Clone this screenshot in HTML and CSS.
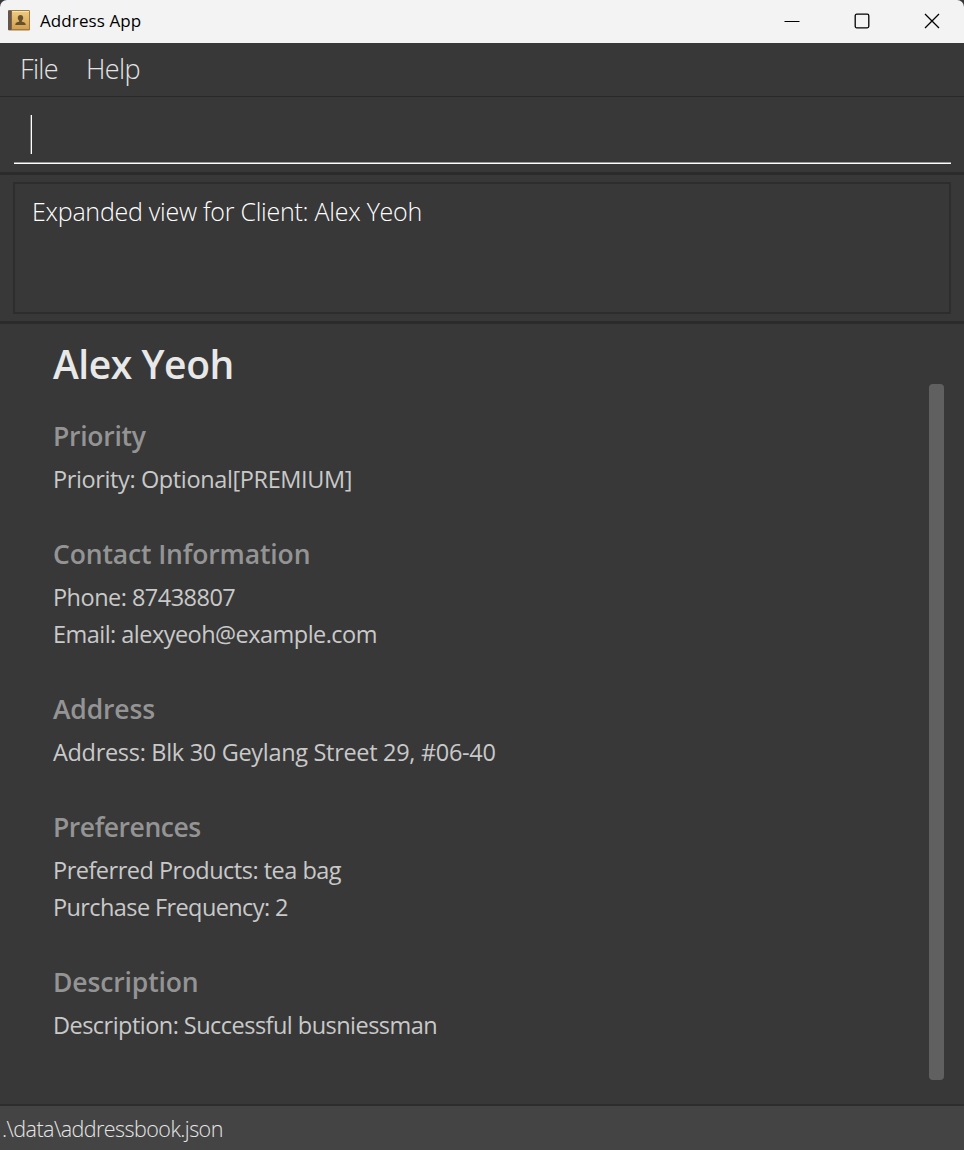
FILE: index.html
```html
<!DOCTYPE html>
<html lang="en">
<head>
<meta charset="utf-8">
<title>Address App</title>
<link rel="stylesheet" href="styles.css">
</head>
<body>
<div class="window">
  <header class="titlebar">
    <svg class="app-icon" width="22" height="21" viewBox="0 0 22 21">
      <defs><linearGradient id="cover" x1="0" y1="0" x2="0" y2="1"><stop offset="0" stop-color="#eccb83"/><stop offset="1" stop-color="#d3a050"/></linearGradient></defs>
      <rect x="0" y="0" width="22" height="20.5" rx="1.2" fill="#a47a3c"/>
      <rect x="4" y="1" width="17" height="18" fill="url(#cover)"/>
      <rect x="0" y="0.5" width="3.6" height="19.5" rx="1" fill="#65544c"/>
      <rect x="4" y="1" width="17" height="1" fill="#f7e2ad"/>
      <path d="M12.500 5c1.800 0 2.700 1.100 2.700 2.800 0 1.200-.5 2.300-1.300 2.900v1c1.600.3 3.900.9 3.900 3.300H7.200c0-2.400 2.300-3 3.900-3.300v-1c-.8-.6-1.300-1.700-1.300-2.900C9.800 6.100 10.700 5 12.500 5z" fill="#66502c"/>
    </svg>
    <span class="app-title">Address App</span>
    <div class="controls">
      <svg width="16" height="16" viewBox="0 0 16 16"><path d="M0.500 8.500h15" stroke="#000"/></svg>
      <svg width="16" height="16" viewBox="0 0 16 16"><rect x="1.200" y="1.200" width="13.600" height="13.600" rx="1.500" fill="none" stroke="#000" stroke-width="1.300"/></svg>
      <svg width="16" height="16" viewBox="0 0 16 16"><path d="M1 1l14 14M15 1L1 15" stroke="#000" stroke-width="1.300"/></svg>
    </div>
  </header>
  <nav class="menubar"><span>File</span><span>Help</span></nav>
  <section class="command"><div class="field"><span class="caret"></span></div></section>
  <section class="result"><div class="result-box">Expanded view for Client: Alex Yeoh</div></section>
  <main class="details">
    <div class="person">
      <h1>Alex Yeoh</h1>
      <section class="group">
        <h2 class="priority-title">Priority</h2>
        <p class="priority">Priority: Optional[PREMIUM]</p>
      </section>
      <section class="group">
        <h2 class="contact-title">Contact Information</h2>
        <p class="phone">Phone: 87438807</p>
        <p class="email">Email: alexyeoh@example.com</p>
      </section>
      <section class="group">
        <h2 class="address-title">Address</h2>
        <p class="address">Address: Blk 30 Geylang Street 29, #06-40</p>
      </section>
      <section class="group">
        <h2 class="preferences-title">Preferences</h2>
        <p class="products">Preferred Products: tea bag</p>
        <p class="frequency">Purchase Frequency: 2</p>
      </section>
      <section class="group">
        <h2 class="description-title">Description</h2>
        <p class="description">Description: Successful busniessman</p>
      </section>
    </div>
    <div class="scroll-thumb"></div>
  </main>
  <footer class="statusbar">.\data\addressbook.json</footer>
</div>
</body>
</html>
```
FILE: styles.css
```css
* { box-sizing: border-box; }
body { margin: 0; background: #383838; font-family: "Open Sans", "Noto Sans", sans-serif; }
h1, h2, p { margin: 0; white-space: nowrap; }
.window { width: 964px; height: 1150px; display: flex; flex-direction: column; background: #383838; overflow: hidden; }
.window > * { flex-shrink: 0; }

.titlebar { height: 43px; display: flex; align-items: center; background: #f3f3f3; color: #000; padding: 0 24px 2px 8px; border-radius: 7px 7px 0 0; }
.app-title { font-size: 17px; letter-spacing: 0.100px; margin-left: 10px; }
.controls { display: flex; gap: 54px; margin-left: auto; }
.controls svg { display: block; }

.menubar { height: 54px; display: flex; gap: 28px; padding-left: 20px; border-bottom: 1px solid #282828; font-size: 27px; font-weight: 300; letter-spacing: -0.650px; line-height: 52px; color: #e4e4e4; }

.command { height: 78px; padding: 10px 13px 0 14px; border-bottom: 3px solid #2b2b2b; }
.field { height: 57px; padding: 8px 0 0 17px; border-bottom: 1px solid #fff; box-shadow: inset 0 -1px #999; }
.caret { display: block; width: 1px; height: 39px; background: #fff; box-shadow: -1px 0 #777; }

.result { height: 149px; padding: 7px 13px 0; border-bottom: 3px solid #2b2b2b; }
.result-box { height: 132px; padding: 8px 17px; border: 2px solid #2d2d2d; font-size: 25px; font-weight: 300; letter-spacing: -0.250px; line-height: 38px; color: #fff; }

.details { height: 780px; display: flex; justify-content: space-between; padding: 13px 20px 0 53px; }
h1 { font-size: 39px; font-weight: 600; letter-spacing: -0.450px; line-height: 54px; color: #e8e8e8; margin-bottom: 26px; }
.group { margin-bottom: 37px; }
h2 { font-size: 26.500px; font-weight: 600; line-height: 38px; color: #949494; margin-bottom: 6px; }
p { font-size: 23.500px; line-height: 37px; color: #c9c9c9; }

.priority-title { letter-spacing: -0.250px; }
.contact-title { letter-spacing: -0.130px; }
.address-title { letter-spacing: -0.150px; }
.preferences-title { letter-spacing: -0.450px; }
.description-title { letter-spacing: -0.130px; }
.priority { letter-spacing: -0.380px; }
.phone { letter-spacing: -0.520px; }
.email { letter-spacing: -0.530px; }
.address { letter-spacing: -0.310px; }
.products { letter-spacing: -0.500px; }
.frequency { letter-spacing: -0.600px; }
.description { letter-spacing: -0.530px; }

.scroll-thumb { width: 15px; height: 696px; margin-top: 47px; border-radius: 4px; background: #606060; }

.statusbar { height: 46px; border-top: 2px solid #2d2d2d; background: #444; padding-left: 2px; font-size: 21.500px; font-weight: 300; letter-spacing: -0.550px; line-height: 46px; color: #e6e6e6; overflow: hidden; }
```
